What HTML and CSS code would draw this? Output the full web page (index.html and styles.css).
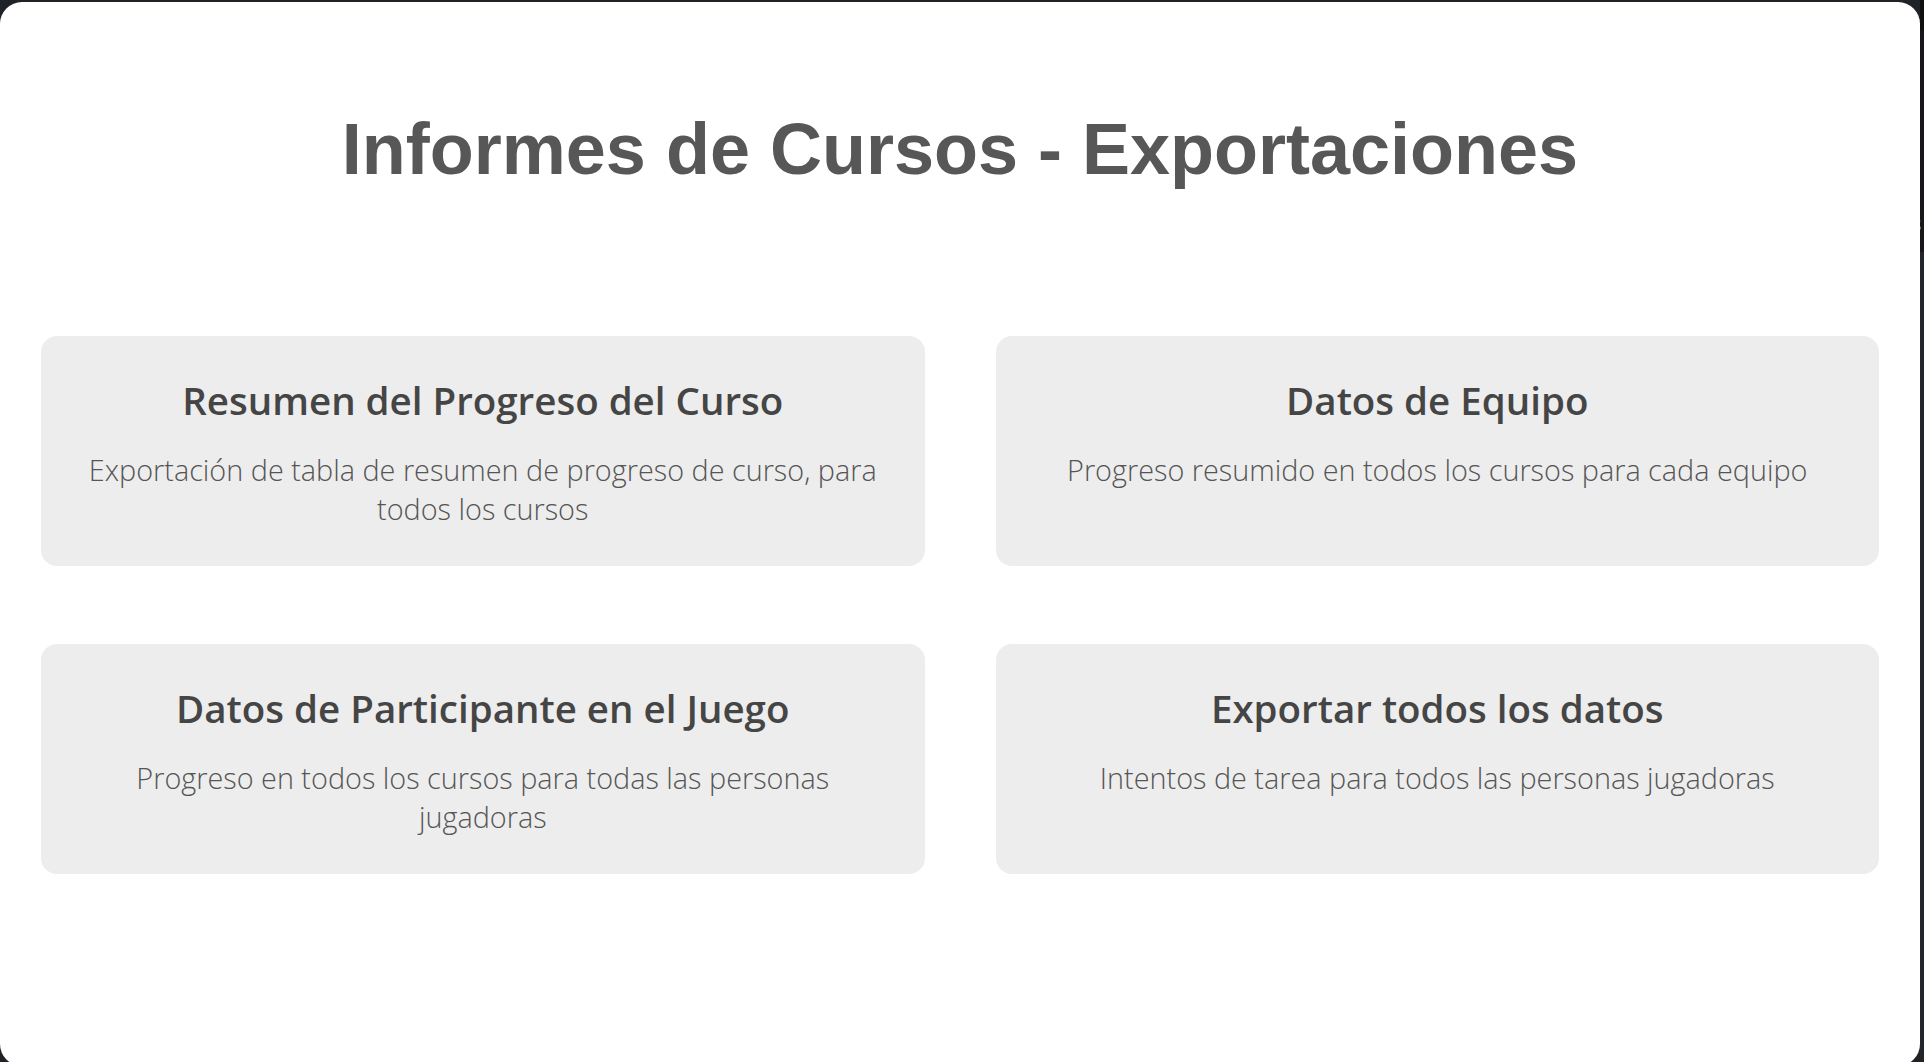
FILE: index.html
```html
<!DOCTYPE html>
<html lang="es">

<head>
    <meta charset="UTF-8">
    <meta name="viewport" content="width=device-width, initial-scale=1.0">
    <title>Informes de Cursos - Exportaciones</title>
    <link rel="stylesheet" href="styles.css">
</head>

<body>
    <div class="shell">
        <main class="panel">
            <h1 class="page-title">Informes de Cursos - Exportaciones</h1>

            <section class="report-grid">
                <a class="report-card" href="#">
                    <h2>Resumen del Progreso del Curso</h2>
                    <p>Exportación de tabla de resumen de progreso de curso, para todos los cursos</p>
                </a>
                <a class="report-card" href="#">
                    <h2>Datos de Equipo</h2>
                    <p>Progreso resumido en todos los cursos para cada equipo</p>
                </a>
                <a class="report-card" href="#">
                    <h2>Datos de Participante en el Juego</h2>
                    <p>Progreso en todos los cursos para todas las personas jugadoras</p>
                </a>
                <a class="report-card" href="#">
                    <h2>Exportar todos los datos</h2>
                    <p>Intentos de tarea para todos las personas jugadoras</p>
                </a>
            </section>
        </main>

        <aside class="side-strip">
            <div class="strip-top"></div>
            <div class="strip-nav"><span>s</span></div>
            <div class="strip-body"></div>
        </aside>
    </div>
</body>

</html>
```

FILE: styles.css
```css
html,
body {
    margin: 0;
    padding: 0;
    height: 100%;
    overflow: hidden;
    background-color: #1f2328;
}

* {
    box-sizing: border-box;
}

.shell {
    display: flex;
    height: 100%;
}

.panel {
    flex: 0 0 1920px;
    height: 1064px;
    margin-top: 2px;
    padding: 0 41px;
    background: #fff;
    border-radius: 22px;
}

.page-title {
    margin: 106px 0 0;
    font-family: "Liberation Sans", Arial, sans-serif;
    font-size: 72px;
    font-weight: bold;
    text-align: center;
    color: #575757;
}

.report-grid {
    display: grid;
    grid-template-columns: 1fr 1fr;
    column-gap: 71px;
    row-gap: 78px;
    margin-top: 146px;
}

.report-card {
    display: block;
    padding: 38px 40px;
    background-color: #ededed;
    border-radius: 16px;
    text-align: center;
    text-decoration: none;
    font-family: "Open Sans", sans-serif;
}

.report-card h2 {
    margin: 0 0 24px;
    font-size: 38.5px;
    font-weight: 600;
    color: #454545;
}

.report-card p {
    margin: 0;
    font-size: 28.8px;
    font-weight: 300;
    line-height: 39px;
    color: #555;
}

/* thin slice of the neighbouring window */
.side-strip {
    flex: 1;
    display: flex;
    flex-direction: column;
}

.strip-top {
    height: 30px;
    background: #0d0f11;
}

.strip-nav {
    height: 222px;
    background: #15171a;
    overflow: hidden;
    font-family: "Open Sans", sans-serif;
    font-size: 20px;
    color: #9a9a9a;
}

.strip-nav span {
    display: block;
    margin: 180px 0 0 -8px;
}

.strip-body {
    flex: 1;
    background: #22262b;
}
```
